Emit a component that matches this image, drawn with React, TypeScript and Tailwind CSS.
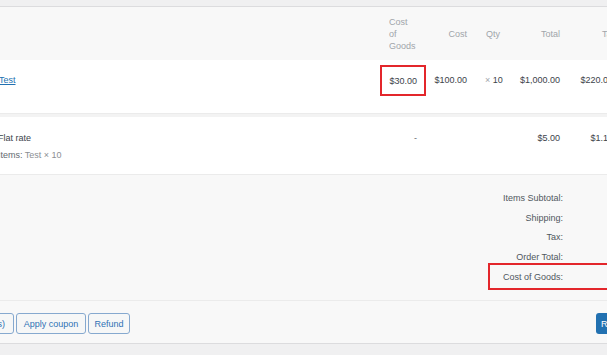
import React from 'react';

// Order items panel (cropped view), Woo-style admin table
const font = "font-['Liberation_Sans',Arial,sans-serif]";

const Cell: React.FC<{ className?: string; children?: React.ReactNode }> = ({ className = '', children }) => (
  <div className={`shrink-0 ${className}`}>{children}</div>
);

export default function App() {
  return (
    <div className={`w-[607px] h-[355px] overflow-hidden bg-[#f0f0f1] ${font} text-[9px] leading-[12px] text-[#3c434a]`}>
      <div className="w-[660px] mt-[6px] border-t border-[#dcdcde]">
        {/* Header */}
        <div className="flex h-[53px] items-center bg-[#f8f8f8] text-[#a0a5aa]">
          <Cell className="w-[380px]" />
          <Cell className="w-[46px] pl-[9px]">
            <span className="block">Cost</span>
            <span className="block">of</span>
            <span className="block">Goods</span>
          </Cell>
          <Cell className="w-[50px] pr-[9px] text-right">Cost</Cell>
          <Cell className="w-[44px] pl-[10px]">Qty</Cell>
          <Cell className="w-[49px] pr-[9px] text-right">Total</Cell>
          <Cell className="w-[53px] pr-[6px] text-right">Tax</Cell>
        </div>

        {/* Line item */}
        <div className="flex h-[53px] items-start bg-white">
          <Cell className="w-[380px] pt-[14px]">
            <a href="#" className="-ml-[1px] text-[#2271b1] underline">Test</a>
          </Cell>
          <Cell className="w-[46px] mt-[5px] h-[31px] border-2 border-[#e3262b] flex items-center justify-end pr-[7px]">
            $30.00
          </Cell>
          <Cell className="w-[50px] pt-[14px] pr-[9px] text-right">$100.00</Cell>
          <Cell className="w-[44px] pt-[14px] pl-[9px]">
            <span className="text-[#a0a5aa]">×</span> 10
          </Cell>
          <Cell className="w-[49px] pt-[14px] pr-[9px] text-right">$1,000.00</Cell>
          <Cell className="w-[53px] pt-[14px] pr-[9px] text-right">$220.00</Cell>
        </div>

        <div className="h-[4px] bg-[#f3f3f3] border-t border-[#ebebeb]" />

        {/* Shipping */}
        <div className="flex h-[57px] items-start bg-white">
          <Cell className="w-[380px] pt-[15px]">
            <div className="-ml-[2px]">Flat rate</div>
            <div className="-ml-[2px] mt-[5px] text-[#8c8f94]">
              <span className="text-[#646970]">Items:</span> Test × 10
            </div>
          </Cell>
          <Cell className="w-[46px] pt-[15px] pr-[9px] text-right text-[#646970]">-</Cell>
          <Cell className="w-[50px]" />
          <Cell className="w-[44px]" />
          <Cell className="w-[49px] pt-[15px] pr-[9px] text-right">$5.00</Cell>
          <Cell className="w-[53px] pt-[15px] pr-[9px] text-right">$1.10</Cell>
        </div>

        {/* Totals */}
        <div className="h-[126px] border-t border-[#ebebeb] bg-[#f8f8f8] pt-[13.5px] text-[#50575e]">
          {['Items Subtotal:', 'Shipping:', 'Tax:', 'Order Total:'].map((label) => (
            <div key={label} className="flex h-[19.5px] items-center pl-[490px]">
              <div className="w-[73px] text-right">{label}</div>
            </div>
          ))}
          <div className="ml-[488px] -mt-[3.5px] flex h-[27px] w-[170px] items-center border-2 border-[#e3262b]">
            <div className="w-[73px] text-right">Cost of Goods:</div>
          </div>
        </div>

        {/* Actions */}
        <div className="flex h-[43px] items-start border-t border-[#ebebeb] bg-[#f8f8f8] pt-[12px]">
          <div className="flex gap-[2px] -ml-[50px]">
            <button className="h-[21px] w-[64px] rounded-[3px] border border-[#86a9cf] bg-[#f6f7f7] text-[#2f72b5] text-[9px]">Add item(s)</button>
            <button className="h-[21px] w-[70px] rounded-[3px] border border-[#86a9cf] bg-[#f6f7f7] text-[#2f72b5] text-[9px]">Apply coupon</button>
            <button className="h-[21px] w-[42px] rounded-[3px] border border-[#86a9cf] bg-[#f6f7f7] text-[#2f72b5] text-[9px]">Refund</button>
          </div>
          <button className="ml-[466px] h-[21px] w-[70px] rounded-[3px] bg-[#2271b1] pl-[5px] text-left text-white text-[9px]">Recalculate</button>
        </div>

        <div className="border-t border-[#dcdcde]" />
      </div>
    </div>
  );
}
